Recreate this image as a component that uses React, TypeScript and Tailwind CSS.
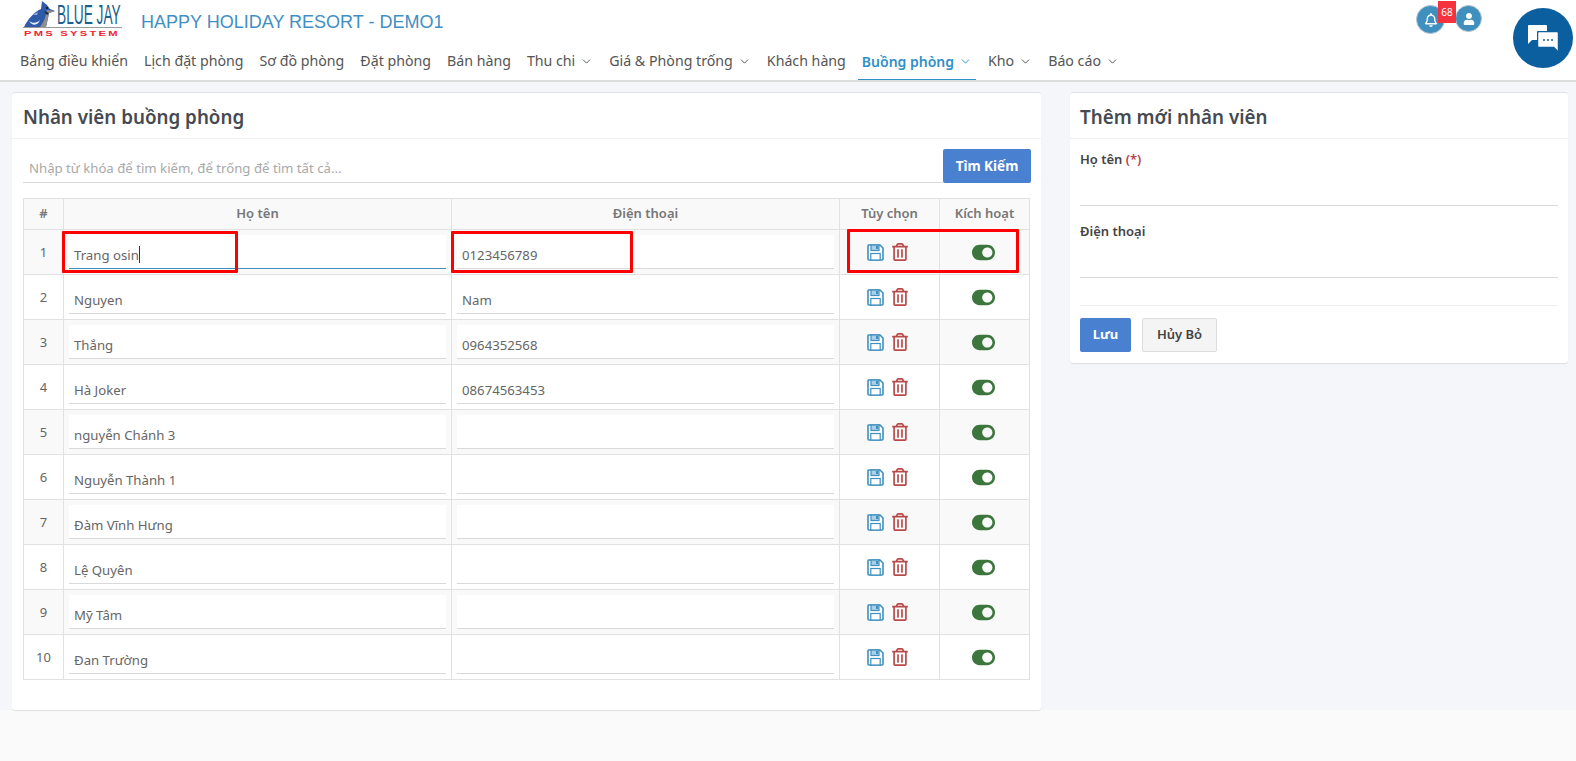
import React from 'react';
import { FaRegTrashAlt, FaToggleOn, FaRegBell, FaUser } from 'react-icons/fa';
import { ChevronDown } from 'lucide-react';

const navItems = [
  { label: 'Bảng điều khiển' },
  { label: 'Lịch đặt phòng' },
  { label: 'Sơ đồ phòng' },
  { label: 'Đặt phòng' },
  { label: 'Bán hàng' },
  { label: 'Thu chi', caret: true },
  { label: 'Giá & Phòng trống', caret: true },
  { label: 'Khách hàng' },
  { label: 'Buồng phòng', caret: true, active: true },
  { label: 'Kho', caret: true },
  { label: 'Báo cáo', caret: true },
];

const staff = [
  { name: 'Trang osin', phone: '0123456789' },
  { name: 'Nguyen', phone: 'Nam' },
  { name: 'Thắng', phone: '0964352568' },
  { name: 'Hà Joker', phone: '08674563453' },
  { name: 'nguyễn Chánh 3', phone: '' },
  { name: 'Nguyễn Thành 1', phone: '' },
  { name: 'Đàm Vĩnh Hưng', phone: '' },
  { name: 'Lệ Quyên', phone: '' },
  { name: 'Mỹ Tâm', phone: '' },
  { name: 'Đan Trường', phone: '' },
];

function Logo() {
  return (
    <svg width="101" height="40" viewBox="0 0 101 40" className="shrink-0">
      <path d="M2 27 C6 19 12 12 19 9 L20 1 L25 5 L28 9 L33 11 L27 13 L26 18 L24 27 Z" fill="#2f5aa8" />
      <path d="M7 21 C11 24 15 23 18 20 C16 26 10 26 7 21 Z" fill="#e8eef8" />
      <path d="M11 15 L16 12 L15 15 Z" fill="#8fb0e0" />
      <path d="M25 10 L33 11 L27 13 L26 18 L24 27 H18 C22 22 24 16 25 10 Z" fill="#8f8f8f" />
      <path d="M22 11 L27 13 L25 15 Z" fill="#1c2430" />
      <circle cx="25" cy="8" r="1" fill="#111" />
      <text transform="translate(35 24) scale(0.49 1)" fontSize="28" fontFamily="Liberation Sans, sans-serif" fill="#1d5f8e">BLUE JAY</text>
      <rect x="1" y="27" width="99" height="1" fill="#9a9a9a" />
      <text transform="translate(2 36) scale(1.4 1)" fontSize="8" fontWeight="700" letterSpacing="1.6" fontFamily="Liberation Sans, sans-serif" fill="#f0262f">PMS SYSTEM</text>
    </svg>
  );
}

function SaveIcon() {
  return (
    <svg width="17" height="17" viewBox="0 0 17 17" className="text-[#3f8fbf]">
      <path d="M1.5 1 H13 L16 4 V15 Q16 16 15 16 H2 Q1 16 1 15 V1.5 Z" fill="#fff" stroke="currentColor" strokeWidth="1.6" />
      <rect x="4" y="1" width="8" height="5.5" fill="#a9d0e6" stroke="currentColor" strokeWidth="1.2" />
      <rect x="9" y="2" width="2" height="3" fill="currentColor" />
      <rect x="3.8" y="9.5" width="9.4" height="6.5" fill="#fff" stroke="currentColor" strokeWidth="1.2" />
    </svg>
  );
}

function Header() {
  return (
    <header className="h-[82px] bg-white border-b-2 border-[#dcdddd] flex flex-col">
      <div className="h-[40px] flex items-start pl-[22px] pr-[94px]">
        <Logo />
        <span className="ml-[18px] mt-[10px] text-[18px] leading-[24px] text-[#3f8fc4] font-['Liberation_Sans',sans-serif]">
          HAPPY HOLIDAY RESORT - DEMO1
        </span>
        <div className="ml-auto flex items-start gap-[10px] mt-[5px]">
          <div className="relative w-[29px] h-[29px] rounded-full bg-[#3f8fbf] border border-[#b9c6cf] flex items-center justify-center text-white">
            <FaRegBell size={14} />
            <span className="absolute left-[21px] top-[-5px] w-[18px] h-[22px] bg-[#f5333f] text-white text-[10px] leading-[22px] text-center">68</span>
          </div>
          <div className="w-[27px] h-[27px] rounded-full bg-[#3f8fbf] border border-[#b9c6cf] flex items-center justify-center text-white">
            <FaUser size={12} />
          </div>
        </div>
      </div>
      <nav className="h-[40px] flex pl-[16px] text-[14.2px] text-[#555]">
        {navItems.map((item) => (
          <div
            key={item.label}
            className={`h-[40px] px-[4px] mr-[8px] flex items-center gap-[5px] pt-[3px] border-b-[1.5px] ${
              item.active ? 'border-[#2f8fc8] text-[#2f8fc8] font-semibold text-[14px]' : 'border-transparent'
            }`}
          >
            {item.label}
            {item.caret && <ChevronDown size={13} strokeWidth={1.8} />}
          </div>
        ))}
      </nav>
    </header>
  );
}

function CellInput({ value, focused }: { value: string; focused?: boolean }) {
  return (
    <div
      className={`h-[34px] bg-white pl-[5px] pt-[8px] leading-[24px] text-[13.2px] text-[#666] border-b ${
        focused ? 'border-[#3f8fbf]' : 'border-[#d9d9d9]'
      }`}
    >
      {value}
      {focused && <span className="inline-block w-px h-[17px] bg-[#333] align-[-3px]" />}
    </div>
  );
}

function StaffTable() {
  const th = 'border border-[#dfe1e4] font-semibold text-[13px] text-[#777] h-[31px]';
  const td = 'border border-[#dfe1e4] px-[5px]';
  return (
    <table className="w-full table-fixed border-collapse text-[13px] text-[#666]">
      <colgroup>
        <col className="w-[40px]" />
        <col className="w-[388px]" />
        <col className="w-[388px]" />
        <col className="w-[100px]" />
        <col />
      </colgroup>
      <thead className="bg-[#f9f9f9]">
        <tr>
          <th className={th}>#</th>
          <th className={th}>Họ tên</th>
          <th className={th}>Điện thoại</th>
          <th className={th}>Tùy chọn</th>
          <th className={th}>Kích hoạt</th>
        </tr>
      </thead>
      <tbody>
        {staff.map((s, i) => (
          <tr key={i} className={`h-[45px] ${i % 2 === 0 ? 'bg-[#f9f9f9]' : 'bg-white'}`}>
            <td className={`${td} text-center pt-[2px]`}>{i + 1}</td>
            <td className={td}><CellInput value={s.name} focused={i === 0} /></td>
            <td className={td}><CellInput value={s.phone} /></td>
            <td className={td}>
              <div className="flex items-center justify-center gap-[7px] pr-[3px]">
                <SaveIcon />
                <FaRegTrashAlt size={18} className="text-[#b84a4a]" />
              </div>
            </td>
            <td className={td}>
              <div className="flex justify-center pr-[3px]">
                <FaToggleOn size={23} className="text-[#3c763d]" />
              </div>
            </td>
          </tr>
        ))}
      </tbody>
    </table>
  );
}

function RedBox({ className }: { className: string }) {
  return <div className={`absolute border-[3px] border-[#ff0000] rounded-[1px] pointer-events-none ${className}`} />;
}

function ListCard() {
  return (
    <section className="relative w-[1029px] h-[618px] shrink-0 bg-white rounded-[3px] border-t border-[#dde1e8] shadow-[0_1px_1px_rgba(0,0,0,0.1)]">
      <h2 className="h-[46px] px-[11px] border-b border-[#f1f1f1] text-[18.8px] leading-[48px] font-semibold text-[#454a52]">
        Nhân viên buồng phòng
      </h2>
      <div className="flex h-[59px] pl-[11px] pr-[10px] pt-[10px]">
        <div className="flex-1 h-[34px] border-b border-[#d9d9d9] pl-[6px] text-[13.2px] leading-[38px] text-[#a9a9a9]">
          Nhập từ khóa để tìm kiếm, để trống để tìm tất cả...
        </div>
        <button className="w-[88px] h-[34px] bg-[#4a80d0] text-white text-[13.5px] font-bold rounded-[2px]">Tìm Kiếm</button>
      </div>
      <div className="pl-[11px] pr-[11px]">
        <StaffTable />
      </div>
      <RedBox className="left-[50px] top-[138px] w-[176px] h-[42px]" />
      <RedBox className="left-[439px] top-[138px] w-[182px] h-[42px]" />
      <RedBox className="left-[835px] top-[136px] w-[172px] h-[44px]" />
    </section>
  );
}

function FormCard() {
  return (
    <aside className="flex-1 h-[271px] bg-white rounded-[3px] border-t border-[#dde1e8] shadow-[0_1px_1px_rgba(0,0,0,0.1)]">
      <h2 className="h-[46px] px-[10px] border-b border-[#f1f1f1] text-[18.8px] leading-[48px] font-semibold text-[#454a52]">
        Thêm mới nhân viên
      </h2>
      <div className="px-[10px] text-[13px] font-semibold text-[#444]">
        <label className="block mt-[10px] leading-[20px]">Họ tên <span className="text-[#b0444f]">(*)</span></label>
        <div className="h-[37px] border-b border-[#d9d9d9]" />
        <label className="block mt-[14px] leading-[22px]">Điện thoại</label>
        <div className="h-[36px] border-b border-[#d9d9d9]" />
        <div className="mt-[27px] border-t border-[#eeeeee] pt-[12px] flex gap-[11px]">
          <button className="w-[51px] h-[34px] bg-[#4a80d0] text-white font-bold rounded-[2px]">Lưu</button>
          <button className="w-[75px] h-[34px] bg-[#f4f4f4] border border-[#dddddd] text-[#444] rounded-[2px]">Hủy Bỏ</button>
        </div>
      </div>
    </aside>
  );
}

export default function App() {
  return (
    <div className="relative h-[761px] overflow-hidden bg-[#fafafa] font-['Noto_Sans','Open_Sans',sans-serif]">
      <Header />
      <main className="flex gap-[29px] h-[628px] bg-[#f5f6fa] pt-[10px] pl-[12px] pr-[8px]">
        <ListCard />
        <FormCard />
      </main>
      <div className="absolute left-[1513px] top-[8px] w-[60px] h-[60px] rounded-full bg-[#0c5f9e] flex items-center justify-center">
        <svg width="32" height="28" viewBox="0 0 32 28">
          <path d="M1 2 Q1 1 2 1 H19 Q20 1 20 2 V7 H11 Q10 7 10 8 V16 H5 L1 20 Z" fill="#fff" />
          <path d="M11 9 Q11 8 12 8 H30 Q31 8 31 9 V23 L31 27 L27 23 H12 Q11 23 11 22 Z" fill="#fff" stroke="#0c5f9e" strokeWidth="0.5" />
          <circle cx="17" cy="16" r="1" fill="#0c5f9e" />
          <circle cx="21" cy="16" r="1" fill="#0c5f9e" />
          <circle cx="25" cy="16" r="1" fill="#0c5f9e" />
        </svg>
      </div>
    </div>
  );
}
